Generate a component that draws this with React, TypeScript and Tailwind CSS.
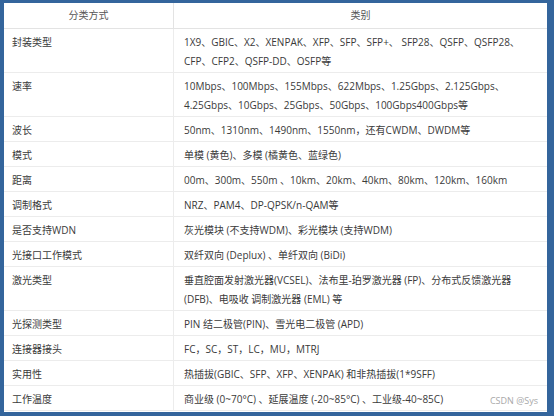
import React from 'react';

const ROWS: [string, string[]][] = [
  ['封装类型', ['1X9、GBIC、X2、XENPAK、XFP、SFP、SFP+、 SFP28、QSFP、QSFP28、', 'CFP、CFP2、QSFP-DD、OSFP等']],
  ['速率', ['10Mbps、100Mbps、155Mbps、622Mbps、1.25Gbps、2.125Gbps、', '4.25Gbps、10Gbps、25Gbps、50Gbps、100Gbps400Gbps等']],
  ['波长', ['50nm、1310nm、1490nm、1550nm，还有CWDM、DWDM等']],
  ['模式', ['单模 (黄色)、多模 (橘黄色、蓝绿色)']],
  ['距离', ['00m、300m、550m 、10km、20km、40km、80km、120km、160km']],
  ['调制格式', ['NRZ、PAM4、DP-QPSK/n-QAM等']],
  ['是否支持WDN', ['灰光模块 (不支持WDM)、彩光模块 (支持WDM)']],
  ['光接口工作模式', ['双纤双向 (Deplux) 、单纤双向 (BiDi)']],
  ['激光类型', ['垂直腔面发射激光器(VCSEL)、法布里-珀罗激光器 (FP)、分布式反馈激光器', '(DFB)、电吸收 调制激光器 (EML) 等']],
  ['光探测类型', ['PIN 结二极管(PIN)、雪光电二极管 (APD)']],
  ['连接器接头', ['FC，SC，ST，LC，MU，MTRJ']],
  ['实用性', ['热插拔(GBIC、SFP、XFP、XENPAK) 和非热插拔(1*9SFF)']],
  ['工作温度', ['商业级 (0~70°C) 、延展温度 (-20~85°C) 、工业级-40~85C)']],
];

const App: React.FC = () => {
  return (
    <div
      className="w-[554px] h-[416px] bg-[#34659c] pl-[4px] pr-[7px] pt-[3px] pb-[4px]"
      style={{ fontFamily: '"Open Sans", "Noto Sans CJK SC", sans-serif' }}
    >
      <div className="relative w-full h-full bg-white text-[10px] text-[#3a3a3a] overflow-hidden">
        {/* header */}
        <div className="grid grid-cols-[170px_1fr] border-b border-[#e3e3e3] h-[26px] text-[#555]">
          <div className="flex items-center justify-center border-r border-[#e3e3e3]">分类方式</div>
          <div className="flex items-center justify-center">类别</div>
        </div>
        {ROWS.map(([label, lines], i) => (
          <div
            key={i}
            className={
              'grid grid-cols-[170px_1fr] border-b border-[#ececec] leading-[19px] ' +
              (lines.length > 1 ? 'h-[44px]' : 'h-[25px]')
            }
          >
            <div className="border-r border-[#ececec] pl-[8px] pt-[4px]">{label}</div>
            <div className="pl-[10px] pt-[4px]">
              {lines.map((l, j) => (
                <div key={j} className="whitespace-nowrap">{l}</div>
              ))}
            </div>
          </div>
        ))}
        <div className="absolute right-[9px] bottom-[5px] text-[9px] text-[#a8a8a8]">CSDN @Sys</div>
      </div>
    </div>
  );
};

export default App;
